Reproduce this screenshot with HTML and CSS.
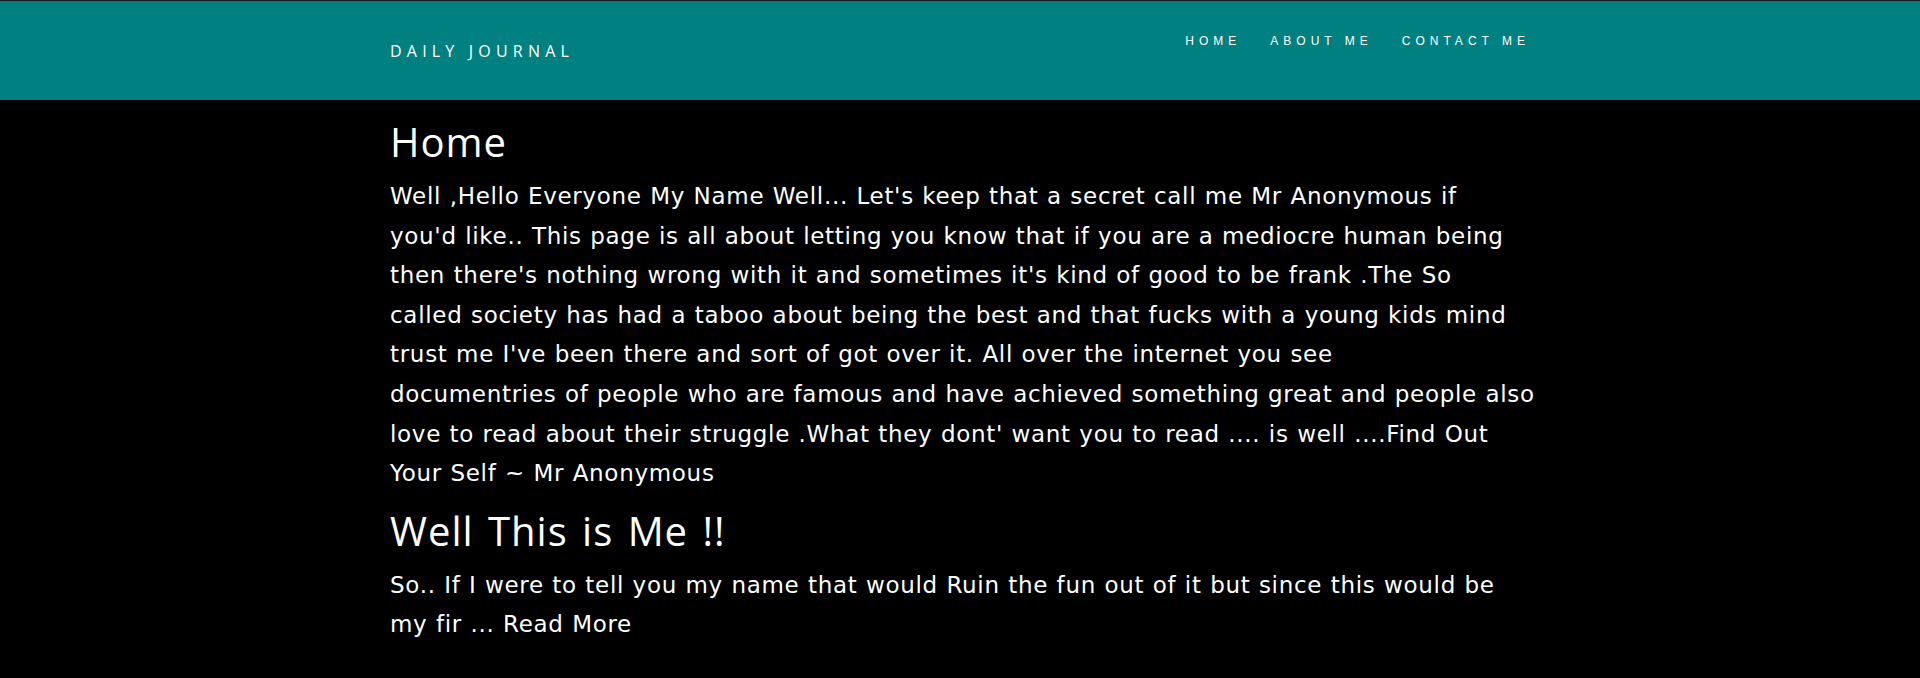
FILE: index.html
```html
<!DOCTYPE html>
<html lang="en">
<head>
<meta charset="utf-8">
<title>Daily Journal</title>
<link rel="stylesheet" href="styles.css">
</head>
<body>
<header class="navbar">
  <div class="container nav-inner">
    <a class="brand" href="#">DAILY JOURNAL</a>
    <ul class="nav-links">
      <li><a href="#">HOME</a></li>
      <li><a href="#">ABOUT ME</a></li>
      <li><a href="#">CONTACT ME</a></li>
    </ul>
  </div>
</header>
<main class="container content">
  <h1 class="title">Home</h1>
  <p class="text">Well ,Hello Everyone My Name Well... Let's keep that a secret call me Mr Anonymous if<br>
you'd like.. This page is all about letting you know that if you are a mediocre human being<br>
then there's nothing wrong with it and sometimes it's kind of good to be frank .The So<br>
called society has had a taboo about being the best and that fucks with a young kids mind<br>
trust me I've been there and sort of got over it. All over the internet you see<br>
documentries of people who are famous and have achieved something great and people also<br>
love to read about their struggle .What they dont' want you to read .... is well ....Find Out<br>
Your Self ~ Mr Anonymous</p>
  <h1 class="title">Well This is Me !!</h1>
  <p class="text">So.. If I were to tell you my name that would Ruin the fun out of it but since this would be<br>
my fir ... <a class="more" href="#">Read More</a></p>
</main>
</body>
</html>
```
FILE: styles.css
```css
html, body {
  margin: 0;
  padding: 0;
  background: #000;
  color: #fff;
}

.container {
  width: 1140px;
  margin: 0 auto;
}

.navbar {
  background: #008080;
  border-top: 1px solid #1c1c1c;
  height: 99px;
}

.nav-inner {
  display: flex;
  justify-content: space-between;
  align-items: flex-start;
  padding-top: 30px;
}

.brand {
  margin-top: 10px;
  font-family: "Open Sans", "Liberation Sans", sans-serif;
  font-size: 16px;
  line-height: 20px;
  letter-spacing: 5.2px;
  color: #fff;
  text-decoration: none;
}

.nav-links {
  display: flex;
  gap: 29px;
  list-style: none;
  margin: 0;
  padding: 0;
}

.nav-links a {
  font-family: "Liberation Sans", Arial, sans-serif;
  font-size: 12px;
  line-height: 20px;
  letter-spacing: 5px;
  color: #fff;
  text-decoration: none;
}

.content {
  padding-top: 18px;
}

.title {
  margin: 0 0 11px;
  font-family: "Open Sans", "Liberation Sans", sans-serif;
  font-weight: 400;
  font-size: 40px;
  line-height: 48px;
  letter-spacing: 1px;
  word-spacing: 3px;
  color: #fff;
}

.text {
  margin: 0 0 13px;
  font-family: "DejaVu Sans", sans-serif;
  font-size: 23px;
  line-height: 39.6px;
  letter-spacing: 0.7px;
  word-spacing: 0.5px;
  white-space: nowrap;
  color: #fff;
}

.more {
  color: #fff;
  text-decoration: none;
}
```
